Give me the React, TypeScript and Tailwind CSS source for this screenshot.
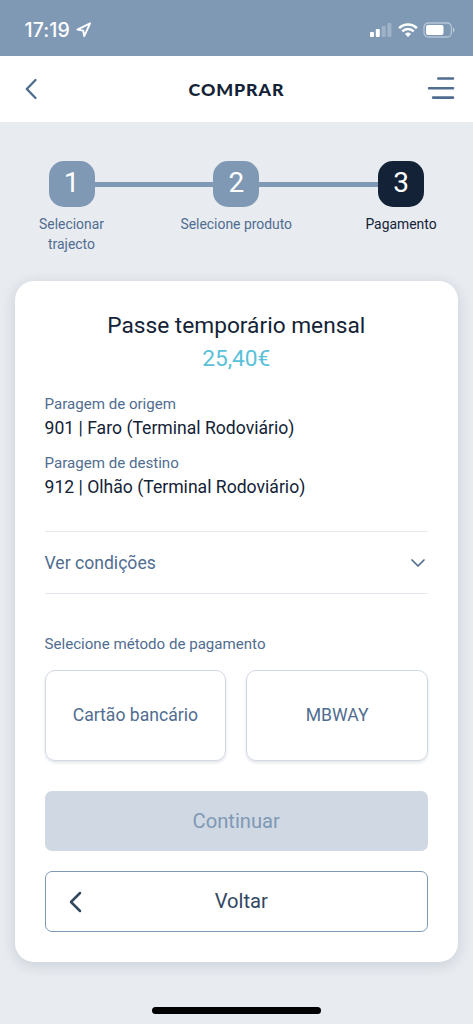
import type { ReactNode } from "react";

function StatusBar() {
  return (
    <div className="flex h-14 items-center justify-between bg-[#7f99b5] pr-[18px] pl-[24.5px] pt-[3px] text-white">
      <div className="flex items-center gap-[4.5px]">
        <span className="w-[47px] whitespace-nowrap font-['Inter',sans-serif] text-[19.5px] leading-6 font-medium tracking-[0.1px]">
          17:19
        </span>
        <svg width="16" height="16" viewBox="0 0 16 16" fill="none" stroke="currentColor" strokeWidth="1.9" strokeLinejoin="round">
          <path d="M14.1 1.4 1.4 7.6 7.2 8.6 8.2 14.2Z" />
        </svg>
      </div>
      <div className="flex items-center">
        <svg width="22" height="14" viewBox="0 0 22 14" fill="currentColor">
          <rect x="0" y="9" width="4" height="5" rx="1" />
          <rect x="5.8" y="6" width="4" height="8" rx="1" />
          <rect x="11.7" y="3" width="4" height="11" rx="1" opacity=".25" />
          <rect x="17.4" y="0" width="4" height="14" rx="1" opacity=".25" />
        </svg>
        <svg className="ml-[6px]" width="20" height="14" viewBox="0 0 20 14" fill="none" stroke="currentColor" strokeWidth="2.5">
          <path d="M1.1 5.1a12.5 12.5 0 0 1 17.8 0" />
          <path d="M4.3 8.4a8 8 0 0 1 11.4 0" />
          <path d="M10 14 7 11a4.3 4.3 0 0 1 6 0Z" fill="currentColor" stroke="none" />
        </svg>
        <svg className="ml-[5px]" width="32" height="16" viewBox="0 0 32 16" fill="none">
          <rect x="1" y="1" width="27.4" height="14" rx="4.2" stroke="white" strokeOpacity=".42" strokeWidth="1.3" />
          <rect x="3" y="3" width="17.5" height="10" rx="2" fill="white" />
          <path d="M30 5.6c2 .8 2 4 0 4.8Z" fill="white" fillOpacity=".5" />
        </svg>
      </div>
    </div>
  );
}

function Header() {
  return (
    <header className="grid h-[66px] grid-cols-[1fr_auto_1fr] items-center bg-white pr-[18px] pl-[18px]">
      <svg className="ml-[6px]" width="28" height="22" viewBox="0 0 28 22" fill="none" stroke="#506d90" strokeWidth="2.4" strokeLinecap="round" strokeLinejoin="round">
        <path d="M11.5 2 2.8 11l8.7 9" />
      </svg>
      <h1 className="font-['Lato',sans-serif] text-[17.8px] leading-6 font-black tracking-[0.9px] text-[#132236]">COMPRAR</h1>
      <svg className="mb-[3px] justify-self-end" width="28" height="24" viewBox="0 0 28 24" fill="none" stroke="#506d90" strokeWidth="2.6" strokeLinecap="round">
        <path d="M11.3 2.5h14.7M2.1 12.2h23.9M6.1 21.6h19.9" />
      </svg>
    </header>
  );
}

function Step({ number, label, active = false }: { number: number; label: ReactNode; active?: boolean }) {
  return (
    <div className="flex w-[46px] flex-col items-center">
      <div className={`flex h-[46px] w-[46px] items-center justify-center rounded-[15px] pb-px text-[28px] leading-8 font-normal text-white ${active ? "bg-[#132236]" : "bg-[#7f99b5]"}`}>
        {number}
      </div>
      <div className={`mt-[7px] text-center text-[13.9px] leading-5 whitespace-nowrap ${active ? "text-[#132236]" : "text-[#506d90]"}`}>
        {label}
      </div>
    </div>
  );
}

function Stop({ label, name }: { label: string; name: string }) {
  return (
    <div>
      <div className="h-[23px] text-[15.1px] leading-[23px] text-[#506d90]">{label}</div>
      <div className="h-[26px] text-[17.6px] leading-[25px] text-[#132236]">{name}</div>
    </div>
  );
}

export default function App() {
  return (
    <div className="flex h-[1024px] w-[473px] flex-col bg-[#e8ebf0] font-['Roboto',sans-serif]">
      <StatusBar />
      <Header />
      <nav className="flex h-[159px] items-start pt-[38.5px] pr-[49px] pl-[48.5px]">
        <Step number={1} label={<>Selecionar<br />trajecto</>} />
        <div className="mt-[21px] h-[5px] flex-1 bg-[#7f99b5]" />
        <Step number={2} label="Selecione produto" />
        <div className="mt-[21px] h-[5px] flex-1 bg-[#7f99b5]" />
        <Step number={3} label="Pagamento" active />
      </nav>
      <main className="mx-[15px] flex h-[681px] flex-col rounded-[19px] bg-white pr-[30px] pl-[29.5px] pt-[29px] shadow-[0_3px_14px_rgba(40,60,80,0.16)]">
        <h2 className="text-center text-[22.7px] leading-8 text-[#132236]">Passe temporário mensal</h2>
        <div className="text-center text-[22.7px] leading-[34px] text-[#59c1d9]">25,40€</div>
        <div className="mt-[17px] flex flex-col gap-[10px]">
          <Stop label="Paragem de origem" name="901 | Faro (Terminal Rodoviário)" />
          <Stop label="Paragem de destino" name="912 | Olhão (Terminal Rodoviário)" />
        </div>
        <div className="mt-[30px] flex h-[63px] items-center justify-between border-y border-[#e5e9ef] pt-px text-[17.6px] text-[#506d90]">
          <span>Ver condições</span>
          <svg className="mr-[2px]" width="16" height="10" viewBox="0 0 16 10" fill="none" stroke="currentColor" strokeWidth="1.7" strokeLinecap="round" strokeLinejoin="round">
            <path d="m2 2 6 6 6-6" />
          </svg>
        </div>
        <div className="mt-[38px] h-6 text-[15.1px] leading-6 text-[#506d90]">Selecione método de pagamento</div>
        <div className="mt-[14px] grid grid-cols-2 gap-5 text-[17.6px] text-[#506d90]">
          <button className="h-[91px] rounded-[10px] border border-[#d0d8e3] shadow-[0_2px_3px_rgba(40,60,80,0.12)]">Cartão bancário</button>
          <button className="h-[91px] rounded-[10px] border border-[#d0d8e3] shadow-[0_2px_3px_rgba(40,60,80,0.12)]">MBWAY</button>
        </div>
        <button className="mt-[30px] h-[60px] shrink-0 rounded-[7px] bg-[#d0d8e3] text-[20.2px] text-[#7f99b5]">Continuar</button>
        <button className="mt-5 grid h-[61px] shrink-0 grid-cols-[1fr_auto_1fr] items-center rounded-[7px] border border-[#7f99b5] pl-[10px] text-[20.2px] text-[#33475f]">
          <svg className="ml-[12px]" width="16" height="22" viewBox="0 0 16 22" fill="none" stroke="currentColor" strokeWidth="2.5" strokeLinecap="round" strokeLinejoin="round">
            <path d="M12 2 3 11l9 9" />
          </svg>
          <span>Voltar</span>
          <span />
        </button>
      </main>
      <div className="mx-auto mt-[45px] h-[6.5px] w-[169px] rounded-full bg-black" />
    </div>
  );
}
